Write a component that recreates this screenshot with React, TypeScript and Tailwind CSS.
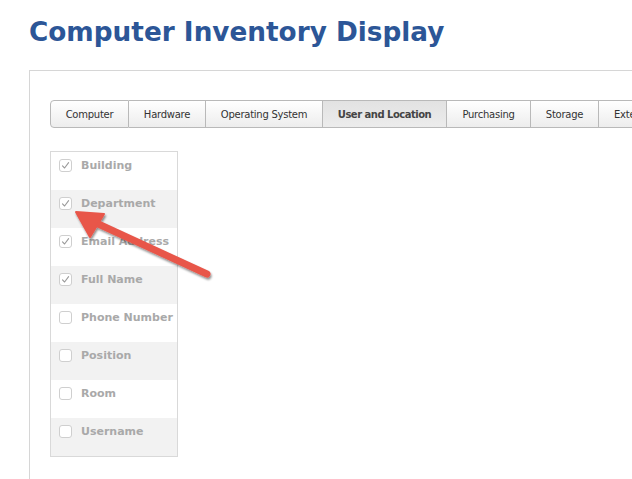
import React from "react";

const tabs = [
  { label: "Computer", w: 79 },
  { label: "Hardware", w: 77 },
  { label: "Operating System", w: 117 },
  { label: "User and Location", w: 124, active: true },
  { label: "Purchasing", w: 84 },
  { label: "Storage", w: 68 },
];

const items = [
  { label: "Building", checked: true },
  { label: "Department", checked: true },
  { label: "Email Address", checked: true },
  { label: "Full Name", checked: true },
  { label: "Phone Number", checked: false },
  { label: "Position", checked: false },
  { label: "Room", checked: false },
  { label: "Username", checked: false },
];

function Check({ checked }: { checked: boolean }) {
  return (
    <div className="mt-[7px] w-[13px] h-[13px] shrink-0 rounded-[3px] border border-[#cfcfcf] bg-white flex items-center justify-center">
      {checked && (
        <svg width="9" height="9" viewBox="0 0 9 9">
          <path d="M1.5 4.8 L3.6 7 L7.6 1.6" fill="none" stroke="#9a9a9a" strokeWidth="1.1" strokeLinecap="round" strokeLinejoin="round" />
        </svg>
      )}
    </div>
  );
}

export default function App() {
  return (
    <div className="relative w-[632px] h-[479px] overflow-hidden bg-white" style={{ fontFamily: '"DejaVu Sans", sans-serif' }}>
      <h1 className="pl-[29px] pt-[14px] text-[26.3px] leading-[36px] font-bold text-[#2c5697]">
        Computer Inventory Display
      </h1>
      <div className="ml-[29px] mt-[20px] border-l border-t border-[#d6d6d6] h-[500px] pl-[20px] pt-[29px]">
        <div className="flex">
          {tabs.map((t, i) => (
            <div
              key={t.label}
              className={
                "shrink-0 h-[28px] flex items-center justify-center text-[10px] border-y border-r border-[#b9b9b9] whitespace-nowrap overflow-hidden " +
                (i === 0 ? "border-l rounded-l-[4px] " : "") +
                (t.active
                  ? "bg-gradient-to-b from-[#e2e2e2] to-[#ececec] font-bold text-[#444] tracking-[-0.5px]"
                  : "bg-gradient-to-b from-[#ffffff] to-[#ededed] text-[#333] tracking-[-0.25px]")
              }
              style={{ width: t.w }}
            >
              {t.label}
            </div>
          ))}
          <div className="shrink-0 h-[28px] flex items-center pl-[15px] pr-[15px] text-[10px] tracking-[-0.25px] text-[#333] border-y border-r border-[#b9b9b9] whitespace-nowrap bg-gradient-to-b from-[#ffffff] to-[#ededed]">
            Extension Attributes
          </div>
        </div>
        <div className="mt-[23px] w-[128px] border border-[#d9d9d9]">
          {items.map((it, i) => (
            <div
              key={it.label}
              className={"h-[38px] flex items-start pl-[8px] gap-[9px] " + (i % 2 === 1 ? "bg-[#f2f2f2]" : "bg-white")}
            >
              <Check checked={it.checked} />
              <span className="mt-[6px] text-[11px] leading-[16px] font-bold text-[#a9a9a9] whitespace-nowrap">{it.label}</span>
            </div>
          ))}
        </div>
      </div>
      <svg className="absolute left-0 top-0 pointer-events-none" width="632" height="479" viewBox="0 0 632 479">
        <defs>
          <filter id="sh" x="-20%" y="-20%" width="140%" height="140%">
            <feDropShadow dx="1" dy="2" stdDeviation="1.2" floodColor="#000" floodOpacity="0.45" />
          </filter>
        </defs>
        <g filter="url(#sh)">
          <line x1="207" y1="274" x2="94" y2="222" stroke="#e8564a" strokeWidth="7" strokeLinecap="round" />
          <polygon points="76,212 104,214 90,237" fill="#e8564a" stroke="#e8564a" strokeWidth="2" strokeLinejoin="round" />
        </g>
      </svg>
    </div>
  );
}
